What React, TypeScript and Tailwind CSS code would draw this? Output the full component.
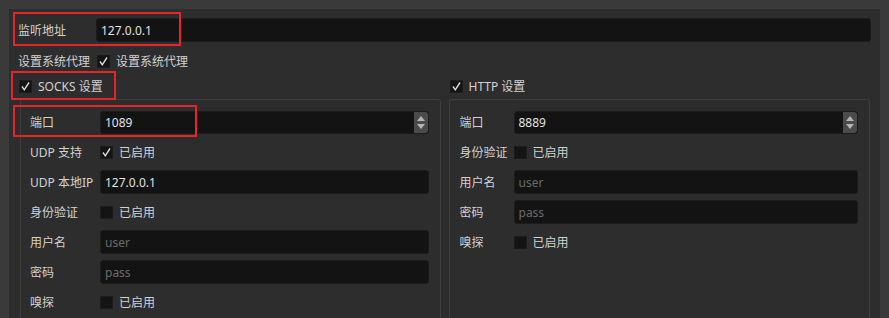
import React from "react";

const font = { fontFamily: '"Noto Sans", "Noto Sans CJK SC", sans-serif' };

const Check = ({ checked }: { checked?: boolean }) => (
  <span className="flex h-[13px] w-[13px] shrink-0 items-center justify-center border border-[#1c1c1c] bg-[#141414]">
    {checked && (
      <svg width="11" height="11" viewBox="0 0 11 11">
        <path d="M2 5.5 L4.3 8.8 L9 1.5" fill="none" stroke="#dcdcdc" strokeWidth="1.4" />
      </svg>
    )}
  </span>
);

const TextBox = ({ value, placeholder }: { value?: string; placeholder?: string }) => (
  <div className="flex h-[24px] flex-1 items-center rounded-[3px] border border-[#1c1c1c] bg-[#131313] px-[4px] pt-[2px]">
    {value ? (
      <span className="text-[#e2e2e2]">{value}</span>
    ) : (
      <span className="text-[#6b6b6b]">{placeholder}</span>
    )}
  </div>
);

const SpinBox = ({ value }: { value: string }) => (
  <div className="flex h-[23px] flex-1 items-stretch rounded-[3px] border border-[#1c1c1c] bg-[#131313]">
    <div className="flex flex-1 items-center px-[4px] pt-[2px] text-[#e2e2e2]">{value}</div>
    <div className="flex w-[14px] flex-col items-center justify-center gap-[3px] rounded-r-[3px] bg-[#4b4b4b]">
      <svg width="8" height="5" viewBox="0 0 8 5">
        <path d="M0 5 L4 0 L8 5 Z" fill="#b5b5b5" />
      </svg>
      <svg width="8" height="5" viewBox="0 0 8 5">
        <path d="M0 0 L4 5 L8 0 Z" fill="#b5b5b5" />
      </svg>
    </div>
  </div>
);

const Row = ({ label, w, children }: { label: string; w: string; children: React.ReactNode }) => (
  <div className="flex h-[24px] items-center">
    <span className={`${w} shrink-0 whitespace-nowrap pt-[2px] text-[#d2d2d2]`}>{label}</span>
    {children}
  </div>
);

const Toggle = ({ checked, text }: { checked?: boolean; text: string }) => (
  <div className="flex items-center gap-[6px]">
    <Check checked={checked} />
    <span className="pt-[2px] text-[#d2d2d2]">{text}</span>
  </div>
);

export default function App() {
  return (
    <div className="relative h-[318px] w-[889px] overflow-hidden bg-[#3a3a3a] pl-[9px] pr-[9px] pt-[9px] text-[12px]" style={font}>
      <div className="h-full bg-[#2d2d2d] pt-[9px]">
        <div className="flex h-[24px] items-center pl-[9px] pr-[9px]">
          <span className="w-[78px] shrink-0 pt-[2px] text-[#d2d2d2]">监听地址</span>
          <TextBox value="127.0.0.1" />
        </div>

        <div className="mt-[10px] flex h-[18px] items-center pl-[9px]">
          <span className="w-[79px] shrink-0 pt-[2px] text-[#d2d2d2]">设置系统代理</span>
          <Toggle checked text="设置系统代理" />
        </div>

        <div className="mt-[7px] grid grid-cols-2 gap-[8px] pl-[10px] pr-[10px]">
          <div className="flex flex-col">
            <div className="flex h-[18px] items-center">
              <Toggle checked text="SOCKS 设置" />
            </div>
            <div className="ml-px mt-[4px] flex flex-col gap-[6px] rounded-[3px] border border-[#3f3f3f] pb-[20px] pl-[9px] pr-[11px] pt-[10px]">
              <Row label="端口" w="w-[70px]">
                <SpinBox value="1089" />
              </Row>
              <Row label="UDP 支持" w="w-[70px]">
                <Toggle checked text="已启用" />
              </Row>
              <Row label="UDP 本地IP" w="w-[70px]">
                <TextBox value="127.0.0.1" />
              </Row>
              <Row label="身份验证" w="w-[70px]">
                <Toggle text="已启用" />
              </Row>
              <Row label="用户名" w="w-[70px]">
                <TextBox placeholder="user" />
              </Row>
              <Row label="密码" w="w-[70px]">
                <TextBox placeholder="pass" />
              </Row>
              <Row label="嗅探" w="w-[70px]">
                <Toggle text="已启用" />
              </Row>
            </div>
          </div>

          <div className="flex flex-col">
            <div className="flex h-[18px] items-center pl-px">
              <Toggle checked text="HTTP 设置" />
            </div>
            <div className="mt-[4px] flex flex-col gap-[6px] rounded-[3px] border border-[#3f3f3f] pb-[80px] pl-[10px] pr-[11px] pt-[10px]">
              <Row label="端口" w="w-[54px]">
                <SpinBox value="8889" />
              </Row>
              <Row label="身份验证" w="w-[54px]">
                <Toggle text="已启用" />
              </Row>
              <Row label="用户名" w="w-[54px]">
                <TextBox placeholder="user" />
              </Row>
              <Row label="密码" w="w-[54px]">
                <TextBox placeholder="pass" />
              </Row>
              <Row label="嗅探" w="w-[54px]">
                <Toggle text="已启用" />
              </Row>
            </div>
          </div>
        </div>
      </div>

      <div className="pointer-events-none absolute left-[13px] top-[12px] h-[34px] w-[168px] border-2 border-[#e5242b]" />
      <div className="pointer-events-none absolute left-[11px] top-[71px] h-[29px] w-[105px] border-2 border-[#e5242b]" />
      <div className="pointer-events-none absolute left-[13px] top-[105px] h-[32px] w-[184px] border-2 border-[#e5242b]" />
    </div>
  );
}
